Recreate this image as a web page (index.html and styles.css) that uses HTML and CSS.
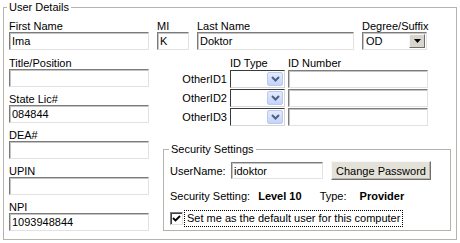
FILE: index.html
```html
<!DOCTYPE html>
<html lang="en">
  <head>
    <title>User Details</title>
    <link rel="stylesheet" href="styles.css">
  </head>
  <body>
    <fieldset class="group details">
      <legend>User Details</legend>
      <div class="name-row">
        <div class="field w-first">
          <label>First Name</label>
          <input class="text" type="text" value="Ima" />
        </div>
        <div class="field w-mi">
          <label>MI</label>
          <input class="text" type="text" value="K" />
        </div>
        <div class="field w-last">
          <label>Last Name</label>
          <input class="text" type="text" value="Doktor" />
        </div>
        <div class="field w-degree">
          <label>Degree/Suffix</label>
          <div class="combo classic">
            <span class="combo-value">OD</span>
            <span class="drop-classic">
              <svg width="7" height="4" viewBox="0 0 7 4"><path d="M0 0h7L3.5 4z" fill="#000"/></svg>
            </span>
          </div>
        </div>
      </div>

      <div class="main">
        <div class="left">
          <div class="field">
            <label>Title/Position</label>
            <input class="text" type="text" value="" />
          </div>
          <div class="field">
            <label>State Lic#</label>
            <input class="text" type="text" value="084844" />
          </div>
          <div class="field">
            <label>DEA#</label>
            <input class="text" type="text" value="" />
          </div>
          <div class="field">
            <label>UPIN</label>
            <input class="text" type="text" value="" />
          </div>
          <div class="field">
            <label>NPI</label>
            <input class="text" type="text" value="1093948844" />
          </div>
        </div>

        <div class="right">
          <div class="ids">
            <span></span>
            <span class="col-head">ID Type</span>
            <span class="col-head">ID Number</span>

            <span class="row-label">OtherID1</span>
            <div class="combo xp">
              <span class="drop-xp">
                <svg width="9" height="6" viewBox="0 0 9 6"><path d="M1 1l3.5 3.5L8 1" fill="none" stroke="#4d6185" stroke-width="2"/></svg>
              </span>
            </div>
            <input class="text" type="text" value="" />

            <span class="row-label">OtherID2</span>
            <div class="combo xp">
              <span class="drop-xp">
                <svg width="9" height="6" viewBox="0 0 9 6"><path d="M1 1l3.5 3.5L8 1" fill="none" stroke="#4d6185" stroke-width="2"/></svg>
              </span>
            </div>
            <input class="text" type="text" value="" />

            <span class="row-label">OtherID3</span>
            <div class="combo xp">
              <span class="drop-xp">
                <svg width="9" height="6" viewBox="0 0 9 6"><path d="M1 1l3.5 3.5L8 1" fill="none" stroke="#4d6185" stroke-width="2"/></svg>
              </span>
            </div>
            <input class="text" type="text" value="" />
          </div>

          <fieldset class="group security">
            <legend>Security Settings</legend>
            <div class="user-row">
              <span class="user-label">UserName:</span>
              <input class="text user-box" type="text" value="idoktor" />
              <button class="btn" type="button">Change Password</button>
            </div>
            <div class="level-row">
              <span>Security Setting:</span>
              <b class="level">Level 10</b>
              <span class="type">Type:</span>
              <b class="provider">Provider</b>
            </div>
            <div class="check-row">
              <span class="check">
                <svg width="9" height="9" viewBox="0 0 9 9"><path d="M1 4l2.5 2.5L8 2" fill="none" stroke="#000" stroke-width="1.8"/></svg>
              </span>
              <span class="check-label">Set me as the default user for this computer</span>
            </div>
          </fieldset>
        </div>
      </div>
    </fieldset>
  </body>
</html>
```

FILE: styles.css
```css
* {
  margin: 0;
  padding: 0;
  box-sizing: border-box;
}
body {
  font-family: "Liberation Sans", Arial, sans-serif;
  font-size: 11px;
  color: #000;
  background-color: #fff;
  padding-top: 1px;
}
.group {
  border: 1px solid #b4b4ac;
  min-width: 0;
}
.group legend {
  line-height: 13px;
  padding: 0 2px;
}
.details {
  margin: 0 3px;
  width: 454px;
  padding: 6px 5px 8px 5px;
}
.details > legend {
  margin-left: -2px;
}

.field label {
  display: block;
  line-height: 12px;
  white-space: nowrap;
}
.text {
  display: block;
  width: 100%;
  height: 18px;
  padding: 0 2px;
  font: inherit;
  color: #000;
  background: #fff;
  border: 1px solid;
  border-color: #7c7c7c #e2e2e2 #e2e2e2 #7c7c7c;
  box-shadow: inset 1px 1px 0 #c4c4c4;
  outline: none;
}

.name-row {
  display: flex;
  gap: 8px;
}
.w-first { width: 140px; }
.w-mi { width: 32px; }
.w-last { width: 157px; }
.w-degree { width: 65px; }

.combo {
  display: flex;
  align-items: center;
  height: 18px;
  background: #fff;
  border: 1px solid;
}
.combo.classic {
  border-color: #7c7c7c #e2e2e2 #e2e2e2 #7c7c7c;
  box-shadow: inset 1px 1px 0 #c4c4c4;
  padding: 0 1px 0 3px;
}
.combo-value {
  flex: 1;
}
.drop-classic {
  display: flex;
  align-items: center;
  justify-content: center;
  width: 16px;
  height: 14px;
  background: #d8d5cc;
  border: 1px solid;
  border-color: #f6f6f6 #6e6e6e #6e6e6e #f6f6f6;
}

.main {
  display: flex;
  gap: 14px;
  margin-top: 7px;
}
.left {
  display: flex;
  flex-direction: column;
  gap: 6px;
  width: 140px;
}
.right {
  flex: 1;
  display: flex;
  flex-direction: column;
}

.ids {
  display: grid;
  grid-template-columns: 64px 55px 140px;
  column-gap: 3px;
  row-gap: 1px;
}
.col-head {
  line-height: 12px;
  white-space: nowrap;
}
.row-label {
  text-align: right;
  line-height: 18px;
}
.combo.xp {
  justify-content: flex-end;
  border-color: #3a3a3a #d6d6d6 #d6d6d6 #3a3a3a;
  padding-right: 1px;
}
.drop-xp {
  display: flex;
  align-items: center;
  justify-content: center;
  width: 16px;
  height: 14px;
  border-radius: 2px;
  background: linear-gradient(#e4ebfd, #c4d3f9);
  border: 1px solid #b9c9ef;
}

.security {
  margin-top: 17px;
  padding: 5px 6px 3px 6px;
}
.security > legend {
  margin-left: -1px;
}
.user-row {
  display: flex;
  align-items: center;
  height: 19px;
}
.user-label {
  width: 61px;
}
.user-box {
  width: 92px;
  height: 17px;
}
.btn {
  margin-left: 8px;
  width: 100px;
  height: 19px;
  font: inherit;
  color: #000;
  background: #e4e2d8;
  border: 1px solid;
  border-color: #f8f8f8 #6f6f6f #6f6f6f #f8f8f8;
  box-shadow: inset -1px -1px 0 #b9b6aa;
}
.level-row {
  margin-top: 10px;
  line-height: 13px;
  white-space: nowrap;
}
.level {
  margin-left: 5px;
}
.type {
  margin-left: 15px;
}
.provider {
  margin-left: 10px;
}
.check-row {
  display: flex;
  align-items: center;
  margin-top: 7px;
}
.check {
  display: flex;
  align-items: center;
  justify-content: center;
  width: 13px;
  height: 13px;
  background: #fff;
  border: 1px solid;
  border-color: #7c7c7c #e2e2e2 #e2e2e2 #7c7c7c;
  box-shadow: inset 1px 1px 0 #404040;
}
.check-label {
  margin-left: 1px;
  padding: 1px 2px;
  line-height: 13px;
  border: 1px dotted #000;
  white-space: nowrap;
}
```
